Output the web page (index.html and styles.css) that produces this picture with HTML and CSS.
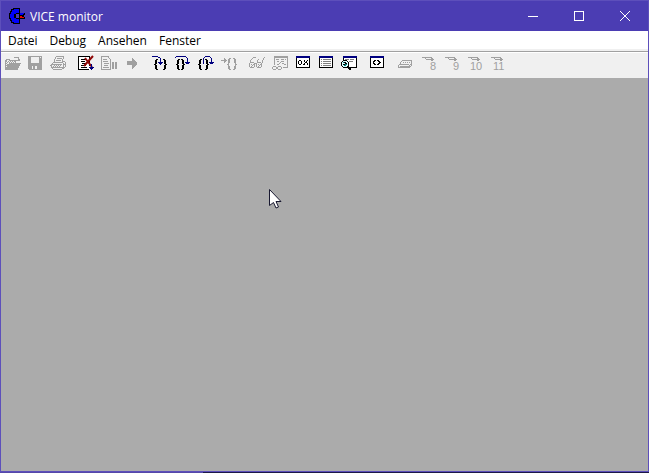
FILE: index.html
```html
<!DOCTYPE html>
<html lang="de">
<head>
<meta charset="utf-8">
<title>VICE monitor</title>
<link rel="stylesheet" href="styles.css">
</head>
<body>
<div class="window">
  <header class="titlebar">
    <svg class="logo" viewBox="0 0 16 16" shape-rendering="crispEdges" aria-hidden="true">
      <path fill="#000" d="M4 0h7v5h5v2h-1v2h1v2h-5v5H4v-1H2v-2H1v-2H0V5h1V3h1V1h2z"/>
      <path fill="#0000fa" d="M5 1h5v4H7v1H5v4h2v1h3v4H5v-1H3v-2H2v-2H1V6h1V4h1V2h2z"/>
      <path fill="#4b3db3" d="M7 6h3v4H7z"/>
      <path fill="#0000fa" d="M11 5h4v1h-1v1h-3z"/>
      <path fill="#f00000" d="M11 8h2v1h2v1h-4z"/>
    </svg>
    <h1 class="title">VICE monitor</h1>
    <div class="controls">
      <button aria-label="Minimieren"><svg viewBox="0 0 10 10" shape-rendering="crispEdges"><path d="M0 5.5h10"/></svg></button>
      <button aria-label="Maximieren"><svg viewBox="0 0 10 10" shape-rendering="crispEdges"><path d="M.5.5h9v9h-9z"/></svg></button>
      <button aria-label="Schließen"><svg viewBox="0 0 10 10"><path d="M0 0l10 10M10 0L0 10"/></svg></button>
    </div>
  </header>
  <nav class="menubar">
    <button>Datei</button>
    <button>Debug</button>
    <button>Ansehen</button>
    <button>Fenster</button>
  </nav>
  <div class="toolbar" role="toolbar" aria-label="Werkzeuge">
    <div class="group">
      <button disabled aria-label="Öffnen"><svg viewBox="0 0 18 18"><path d="M10 3.5h4M14.5 3v4M12 6.5h4M15.5 5v1M1.5 15V6.5h1v-1h3v1h6V9"/><path class="fill" d="M5 9h12v1h-1v2h-1v2h-1v2H1v-1h1v-2h1v-2h1v-1h1z"/><path d="M2 7.5h1M4 7.5h1M6 7.5h1M8 7.5h1M10 7.5h1M3 8.5h1M5 8.5h1M7 8.5h1M9 8.5h1M2 9.5h1M2 11.5h1M3 10.5h1"/></svg></button>
      <button disabled aria-label="Speichern"><svg viewBox="0 0 18 18"><path class="fill" fill-rule="evenodd" d="M1 2h14v14H2v-1H1zM4 3v6h8V3zM5 12v3h5v-3zM13 3v1h1V3z"/><path class="fill" d="M6 12h2v3H6z"/></svg></button>
      <button disabled aria-label="Drucken"><svg viewBox="0 0 18 18"><path d="M6 2.5h8M5.5 3v2M4.5 5v3M13.5 3v2M12.5 5v3M7 4.5h5M6 6.5h5M3 8.5h10M2 9.5h1M13 7.5h2M1.5 10v4M0 11.5h1M2 10.5h10M2 13.5h11M3 15.5h9M13.5 9v6M15.5 8v5M14 13.5h1M14 10.5h1M2 14.5h1M12 14.5h1M4 11.5h1M6 11.5h1M8 11.5h1M10 11.5h1M3 12.5h1M5 12.5h1M7 12.5h1M9 12.5h1"/></svg></button>
    </div>
    <div class="group">
      <button aria-label="Ausführung abbrechen"><svg viewBox="0 0 18 18"><path fill="#fff" d="M0 2h12v14H0z"/><path stroke="#000" d="M0 2.5h12M.5 2v14M0 15.5h11M11.5 3v9M3 5.5h5M3 7.5h4M4 9.5h5M3 11.5h5M3 13.5h6"/><path class="smooth" stroke="#8f0808" stroke-width="2" d="M7 4l7 9M15 2L6 12"/><path stroke="#000080" d="M13.5 10v6M11 13.5h5M12 14.5h3"/></svg></button>
      <button disabled aria-label="Anhalten"><svg viewBox="0 0 18 18"><path d="M.5 2v14M0 2.5h8M0 15.5h10M9.5 5v10M7 3.5h1M8 4.5h1M2 5.5h4M2 7.5h5M3 9.5h5M3 11.5h4M2 13.5h6"/><path class="fill" d="M11 8h2v7h-2zM14 8h2v7h-2z"/></svg></button>
      <button disabled aria-label="Fortsetzen"><svg viewBox="0 0 18 18"><path class="fill" d="M3 7h5V4h1v1h1v1h1v1h1v1h1v3h-1v1h-1v1h-1v1H9v1H8v-4H3z"/></svg></button>
    </div>
    <div class="group">
      <button aria-label="Einzelschritt"><svg viewBox="0 0 18 18"><path class="brace" d="M4 5h2v1H5v4H4v1h1v4h1v1H4v-1H3v-4H2v-1h1V6h1zM11 5h2v1h1v4h1v1h-1v4h-1v1h-2v-1h1v-4h1v-1h-1V6h-1z"/><path class="navy" d="M0 2.5h6M6 3.5h2M8.5 4v7M6 8.5h5M7 9.5h3"/></svg></button>
      <button aria-label="Prozedurschritt"><svg viewBox="0 0 18 18"><path class="brace" d="M3 5h2v1H4v4H3v1h1v4h1v1H3v-1H2v-4H1v-1h1V6h1zM6 5h2v1h1v4h1v1H9v4H8v1H6v-1h1v-4h1v-1H7V6H6z"/><path class="navy" d="M1 2.5h10M0 3.5h1M11 3.5h1M12.5 4v6M10 8.5h5M11 9.5h3"/></svg></button>
      <button aria-label="Ausführen bis Rücksprung"><svg viewBox="0 0 18 18"><path class="brace" d="M2 5h2v1H3v4H2v1h1v4h1v1H2v-1H1v-4H0v-1h1V6h1zM7 5h2v1h1v4h1v1h-1v4H9v1H7v-1h1v-4h1v-1H8V6H7z"/><path class="navy" d="M5.5 10V4M6 3.5h1M7 2.5h5M12 3.5h1M13.5 4v6M11 8.5h5M12 9.5h3"/></svg></button>
      <button disabled aria-label="Zur Anweisung"><svg viewBox="0 0 18 18"><path d="M0 6.5h6M3.5 4v5M4.5 5v3M8 4.5h2M7.5 5v5M8.5 5v4M6 10.5h2M7.5 11v4M8.5 12v3M8 15.5h2M12 4.5h2M13.5 5v4M14.5 5v5M14 10.5h2M14.5 11v4M13.5 12v3M12 15.5h2"/></svg></button>
    </div>
    <div class="group">
      <button disabled aria-label="Überwachen"><svg viewBox="0 0 18 18"><path d="M1 8.5h4M.5 9v4M5.5 9v4M1 13.5h4M8 8.5h4M7.5 9v4M12.5 9v4M8 13.5h4M6 9.5h1M1.5 6v2M2.5 5v1M3 4.5h1M4.5 3v1M5 3.5h2M13.5 6v3M14.5 4v2M15.5 3v1M8.5 6v2M9.5 5v1M2 10.5h1M4 10.5h1M3 11.5h1M9 10.5h1M11 10.5h1M10 11.5h1M2 12.5h1M9 12.5h1"/></svg></button>
      <button disabled aria-label="Variablen überwachen"><svg viewBox="0 0 18 18"><path d="M2 2.5h14M2 3.5h14M2.5 3v8M15.5 3v11M11 13.5h5M4 5.5h3M9 5.5h3M13 5.5h1M5 7.5h2M9 7.5h3M8 8.5h1M7 9.5h1M10 9.5h2M5 10.5h2M12 10.5h2M1 12.5h3M6 12.5h3M.5 13v2M4.5 13v2M5.5 13v2M9.5 13v2M1 15.5h3M6 15.5h3"/></svg></button>
      <button aria-label="Register"><svg viewBox="0 0 18 18"><path class="pane" d="M1.5 2.5h13v11h-13z"/><path class="bar" d="M1 2h14v2H1z"/><path stroke="#000" d="M4 6.5h2M3.5 7v3M6.5 7v3M4 10.5h2M8 10.5h1M9 6.5h1M12 6.5h1M9.5 7v1M11.5 7v1M10 8.5h2M9.5 9v2M12.5 9v2"/></svg></button>
      <button aria-label="Speicher"><svg viewBox="0 0 18 18"><path class="pane" d="M1.5 2.5h13v11h-13z"/><path class="bar" d="M1 2h14v2H1z"/><path class="lines" d="M3 5.5h1M5 5.5h8M3 7.5h1M5 7.5h8M3 9.5h1M5 9.5h8M3 11.5h1M5 11.5h8"/></svg></button>
      <button aria-label="Disassemblierung"><svg viewBox="0 0 18 18"><path class="pane" d="M2.5 2.5h13v11h-13z"/><path class="bar" d="M2 2h14v2H2z"/><path class="lines" d="M4 5.5h4M9 5.5h4M8 7.5h4"/><path fill="#d8ffff" d="M2 7h4v1h1v4H6v1H2v-1H1V8h1z"/><path stroke="#000" d="M2 6.5h4M1 7.5h1M6 7.5h1M.5 8v4M7.5 8v4M1 12.5h1M6 12.5h1M2 13.5h4M3 8.5h2M2 10.5h2M4 9.5h2"/><path stroke="#008080" d="M2 8.5h1M4 10.5h2M3 11.5h2"/><path stroke="#000" d="M6 12.5h2M7 13.5h2M7 14.5h3M8 15.5h2"/></svg></button>
    </div>
    <div class="group">
      <button aria-label="Konsole"><svg viewBox="0 0 18 18"><path class="pane" d="M1.5 2.5h13v11h-13z"/><path class="bar" d="M1 2h14v2H1z"/><path stroke="#000" d="M5 6.5h2M4 7.5h2M4 8.5h1M4 9.5h2M5 10.5h2M8 6.5h2M9 7.5h2M10 8.5h2M9 9.5h2M8 10.5h2"/></svg></button>
    </div>
    <div class="group">
      <button disabled aria-label="Computer"><svg viewBox="0 0 18 18"><path d="M5 6.5h10M4.5 7v1M3.5 8v2M2.5 10v1M1.5 11v3M14.5 7v3M13.5 10v1M12.5 11v3M2 10.5h10M2 13.5h10M6 8.5h1M8 8.5h1M10 8.5h1M12 8.5h1M13.5 12v1M14.5 9v3M3 12.5h9"/></svg></button>
      <button disabled aria-label="Laufwerk 8"><svg viewBox="0 0 18 18"><path id="drive" d="M2 3.5h10M5 4.5h1M11 4.5h2M6 5.5h8M11 6.5h2"/><text x="10" y="16">8</text></svg></button>
      <button disabled aria-label="Laufwerk 9"><svg viewBox="0 0 18 18"><use href="#drive"/><text x="10" y="16">9</text></svg></button>
      <button disabled aria-label="Laufwerk 10"><svg viewBox="0 0 18 18"><use href="#drive"/><text x="4" y="16">10</text></svg></button>
      <button disabled aria-label="Laufwerk 11"><svg viewBox="0 0 18 18"><use href="#drive"/><text x="4" y="16">11</text></svg></button>
    </div>
  </div>
  <main class="workspace">
    <svg class="cursor" viewBox="0 0 13 20" aria-hidden="true"><path d="M.5.5v16l4-3 2.5 5.5 2.5-1L7 12.500h5z"/></svg>
  </main>
</div>
</body>
</html>
```
FILE: styles.css
```css
* {
  box-sizing: border-box;
}

body {
  margin: 0;
  padding-bottom: 1px;
  background: linear-gradient(90deg, #5548a8 203px, #1c1848 203px);
  font-family: "Open Sans", "Noto Sans", sans-serif;
  font-size: 12px;
}

button {
  margin: 0;
  padding: 0;
  border: 0;
  background: none;
  font: inherit;
  color: #000;
}

.window {
  display: flex;
  flex-direction: column;
  min-height: calc(100vh - 1px);
  border: 1px solid #5d4fbb;
  background: #f0f0f0;
}

.titlebar {
  display: flex;
  align-items: center;
  height: 30px;
  padding-left: 8px;
  background: #4b3db3;
  color: #fff;
}

.logo {
  width: 16px;
  height: 16px;
}

.title {
  flex: 1;
  margin: 0 0 0 5px;
  font-size: 12px;
  font-weight: 400;
}

.controls {
  display: flex;
}

.controls button {
  display: grid;
  place-items: center;
  width: 46px;
  height: 28px;
}

.controls svg {
  width: 10px;
  height: 10px;
  fill: none;
  stroke: #fff;
}

.menubar {
  display: flex;
  gap: 12px;
  height: 18px;
  padding: 0 7px;
  background: #fff;
  line-height: 20px;
}

.toolbar {
  display: flex;
  gap: 5px;
  height: 27px;
  margin-top: 2px;
  border-top: 1px solid #a0a0a0;
  box-shadow: inset 0 1px #fff;
}

.group {
  display: flex;
}

.toolbar button {
  display: flex;
  width: 23px;
  padding: 2px 0 0 3px;
}

.toolbar svg {
  width: 18px;
  height: 18px;
  flex: none;
  fill: none;
  stroke: #a0a0a0;
  shape-rendering: crispEdges;
}

.toolbar .fill {
  fill: #a0a0a0;
  stroke: none;
}

.toolbar text {
  fill: #a0a0a0;
  stroke: none;
  font: 11px "Liberation Sans", sans-serif;
}

.toolbar .smooth {
  shape-rendering: auto;
}

.toolbar .brace {
  fill: #000;
  stroke: none;
}

.toolbar .navy {
  stroke: #000080;
}

.toolbar .pane {
  fill: #fff;
  stroke: #000;
}

.toolbar .bar {
  fill: #000080;
  stroke: none;
}

.toolbar .lines {
  stroke: #808080;
}

.toolbar path[fill] {
  stroke: none;
}

.workspace {
  position: relative;
  flex: 1;
  background: #ababab;
}

.cursor {
  position: absolute;
  left: 268px;
  top: 111px;
  width: 13px;
  height: 20px;
  fill: #fff;
  stroke: #181830;
}
```
